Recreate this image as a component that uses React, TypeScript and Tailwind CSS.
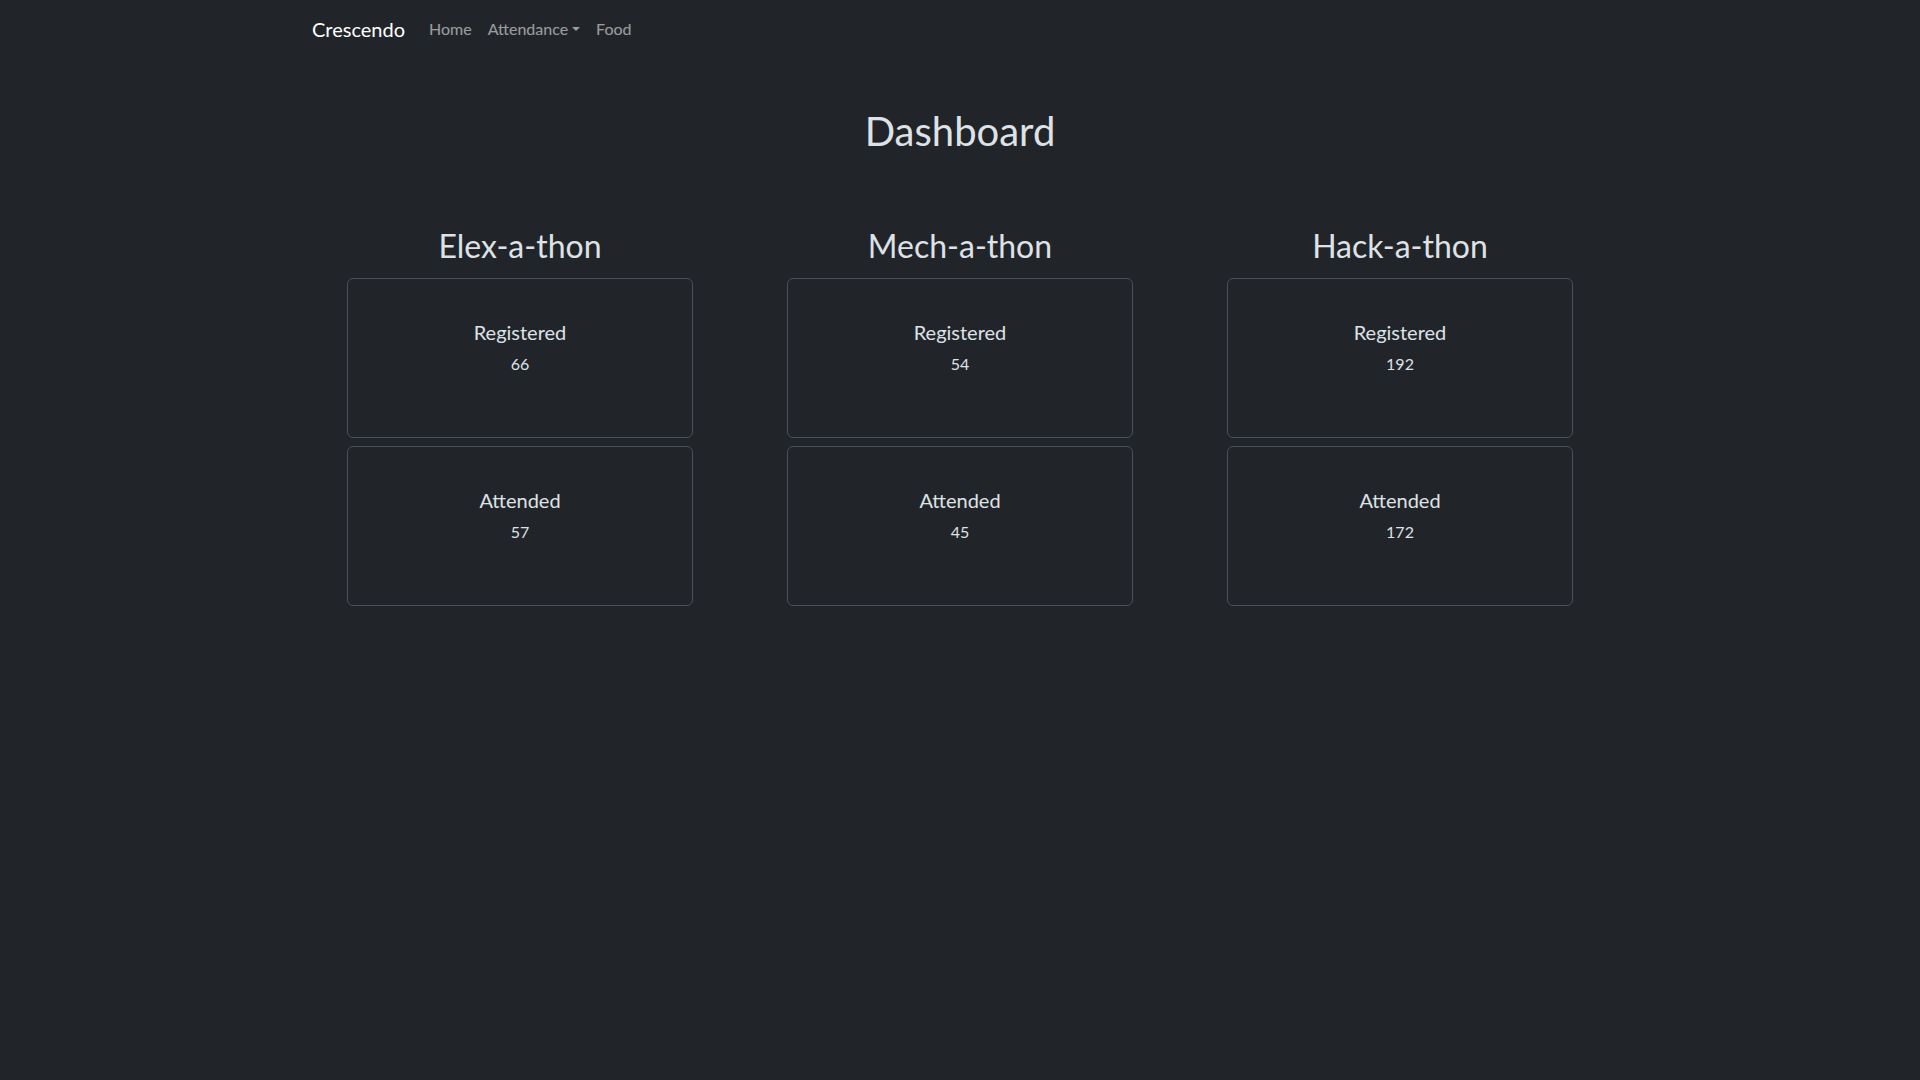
const events = [
  { name: 'Elex-a-thon', registered: 66, attended: 57 },
  { name: 'Mech-a-thon', registered: 54, attended: 45 },
  { name: 'Hack-a-thon', registered: 192, attended: 172 },
];

function StatCard({ label, value }: { label: string; value: number }) {
  return (
    <div className="w-[346px] h-[160px] mx-auto border border-[#495057] rounded-[6px] flex flex-col items-center pt-[41px]">
      <h5 className="text-[20px] leading-[24px] mb-2">{label}</h5>
      <p className="text-[16px] leading-[24px]">{value}</p>
    </div>
  );
}

export default function App() {
  return (
    <div className="min-h-screen bg-[#212529] text-[#dee2e6] font-['Lato',sans-serif]">
      {/* Navbar */}
      <nav className="pt-[9px] pb-2">
        <div className="w-[1320px] mx-auto px-3 flex items-center">
          <a className="text-white text-[20px] leading-[30px] py-[5px] mr-4">Crescendo</a>
          <ul className="flex items-center text-[16px] leading-[24px] text-white/55">
            <li className="px-2 py-2">Home</li>
            <li className="px-2 py-2 flex items-center">
              Attendance
              <span className="ml-[4px] w-0 h-0 border-x-[4.8px] border-x-transparent border-t-[4.8px] border-t-white/55" />
            </li>
            <li className="px-2 py-2">Food</li>
          </ul>
        </div>
      </nav>

      <main className="w-[1320px] mx-auto px-3">
        <h1 className="text-center text-[40px] leading-[48px] mt-[50px]">Dashboard</h1>

        <div className="grid grid-cols-3 -mx-3 mt-[72px]">
          {events.map((ev) => (
            <div key={ev.name} className="flex flex-col">
              <h2 className="text-center text-[32px] leading-[38px] mb-[13px]">{ev.name}</h2>
              <div className="flex flex-col gap-2">
                <StatCard label="Registered" value={ev.registered} />
                <StatCard label="Attended" value={ev.attended} />
              </div>
            </div>
          ))}
        </div>
      </main>
    </div>
  );
}
